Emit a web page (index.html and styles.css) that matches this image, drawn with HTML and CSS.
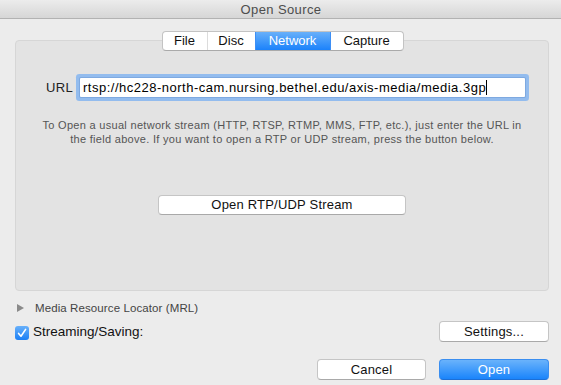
FILE: index.html
```html
<!DOCTYPE html>
<html>
<head>
<meta charset="utf-8">
<title>Open Source</title>
<link rel="stylesheet" href="styles.css">
</head>
<body>
<div class="window">
  <div class="titlebar">Open Source</div>
  <div class="content">
    <div class="tabs">
      <div class="tab tab-file">File</div>
      <div class="tab tab-disc">Disc</div>
      <div class="tab tab-network selected">Network</div>
      <div class="tab tab-capture">Capture</div>
    </div>
    <div class="panel">
      <div class="url-row">
        <span class="url-label">URL</span>
        <div class="url-input"><span class="url-text">rtsp://hc228-north-cam.nursing.bethel.edu/axis-media/media.3gp</span><span class="caret"></span></div>
      </div>
      <p class="help">To Open a usual network stream (HTTP, RTSP, RTMP, MMS, FTP, etc.), just enter the URL in<br>the field above. If you want to open a RTP or UDP stream, press the button below.</p>
      <div class="rtp-row">
        <button class="btn btn-rtp">Open RTP/UDP Stream</button>
      </div>
    </div>
    <div class="mrl-row">
      <span class="disclosure"></span>
      <span class="mrl-label">Media Resource Locator (MRL)</span>
    </div>
    <div class="stream-row">
      <label class="check-label">
        <span class="checkbox"><svg width="14" height="14" viewBox="0 0 14 14"><path d="M3.6 7.4 L6 10.2 L10.6 3.4" fill="none" stroke="#fff" stroke-width="1.6" stroke-linecap="round" stroke-linejoin="round"/></svg></span>
        <span class="check-text">Streaming/Saving:</span>
      </label>
      <button class="btn btn-settings">Settings...</button>
    </div>
    <div class="action-row">
      <button class="btn btn-cancel">Cancel</button>
      <button class="btn btn-open">Open</button>
    </div>
  </div>
</div>
</body>
</html>
```

FILE: styles.css
```css
html, body {
  margin: 0;
  padding: 0;
}
body {
  font-family: "Liberation Sans", Arial, sans-serif;
  background: #ececec;
}
.window {
  width: 561px;
  height: 385px;
  background: #ececec;
  display: flex;
  flex-direction: column;
  overflow: hidden;
}
.titlebar {
  height: 18px;
  line-height: 19px;
  border-bottom: 1px solid #b2b2b2;
  background: linear-gradient(#ececec, #d6d6d6);
  text-align: center;
  font-size: 13px;
  letter-spacing: 0.4px;
  color: #4d4d4d;
  padding-left: 1px;
}
.content {
  padding: 0 12px 0 15px;
  display: flex;
  flex-direction: column;
}
.tabs {
  align-self: center;
  display: flex;
  margin-top: 12px;
  margin-left: 1px;
  height: 18px;
  border: 1px solid #c3c3c3;
  border-bottom-color: #aaaaaa;
  border-radius: 4px;
  background: #ffffff;
  position: relative;
  z-index: 1;
  overflow: hidden;
}
.tab {
  font-size: 13px;
  line-height: 18px;
  text-align: center;
  color: #111;
  border-left: 1px solid #dcdcdc;
}
.tab-file { width: 44px; border-left: none; }
.tab-disc { width: 47px; }
.tab-network { width: 74px; }
.tab-capture { width: 72px; }
.tab.selected {
  background: linear-gradient(#68b0fa, #1b82fb);
  color: #fff;
  border-left-color: #3d8ff5;
}
.tab.selected + .tab { border-left-color: #3d8ff5; }
.panel {
  margin-top: -11px;
  height: 249px;
  background: #e3e3e3;
  border: 1px solid #d6d6d6;
  border-radius: 4px;
  display: flex;
  flex-direction: column;
}
.url-row {
  display: flex;
  align-items: center;
  margin-top: 37px;
  padding-left: 30px;
}
.url-label {
  font-size: 13px;
  letter-spacing: 0.3px;
  color: #222;
  width: 34px;
}
.url-input {
  width: 445px;
  height: 19px;
  background: #fff;
  border-radius: 1px;
  box-shadow: 0 0 0 1px #7ea9e0, 0 0 0 4px #93bcee;
  display: flex;
  align-items: center;
  padding-left: 3px;
  box-sizing: border-box;
}
.url-text {
  font-size: 13px;
  letter-spacing: 0.5px;
  color: #000;
  white-space: nowrap;
}
.caret {
  display: inline-block;
  width: 1px;
  height: 15px;
  background: #000;
  margin-left: 0;
}
.help {
  margin: 21px 0 0 0;
  font-size: 11px;
  letter-spacing: 0.3px;
  line-height: 14px;
  color: #555;
  text-align: center;
}
.rtp-row {
  display: flex;
  justify-content: center;
  margin-top: 49px;
}
.btn {
  font-family: "Liberation Sans", Arial, sans-serif;
  font-size: 13px;
  letter-spacing: 0.2px;
  color: #111;
  background: #fff;
  border: 1px solid #c5c5c5;
  border-bottom-color: #a9a9a9;
  border-radius: 4px;
  padding: 0;
  height: 21px;
  line-height: 19px;
  box-sizing: border-box;
}
.btn-rtp {
  width: 248px;
  height: 20px;
  line-height: 18px;
}
.mrl-row {
  display: flex;
  align-items: center;
  margin-top: 10px;
  height: 14px;
  padding-left: 2px;
}
.disclosure {
  width: 0;
  height: 0;
  border-top: 4.5px solid transparent;
  border-bottom: 4.5px solid transparent;
  border-left: 7px solid #8a8a8a;
}
.mrl-label {
  margin-left: 11px;
  font-size: 11.5px;
  letter-spacing: 0.1px;
  color: #444;
}
.stream-row {
  display: flex;
  align-items: center;
  justify-content: space-between;
  margin-top: 6px;
  height: 21px;
}
.check-label {
  display: flex;
  align-items: center;
}
.checkbox {
  width: 14px;
  height: 14px;
  border-radius: 3px;
  background: linear-gradient(#68b0fa, #1b7ff5);
  display: flex;
  margin-top: 2px;
}
.check-text {
  margin-left: 4px;
  font-size: 13.5px;
  color: #111;
}
.btn-settings {
  width: 110px;
}
.action-row {
  display: flex;
  justify-content: flex-end;
  gap: 13px;
  margin-top: 17px;
}
.btn-cancel {
  width: 109px;
}
.btn-open {
  width: 110px;
  background: linear-gradient(#6ab3fb, #1a84fb);
  border: 1px solid #3a8ef0;
  border-bottom-color: #1d6fd6;
  color: #fff;
}
```
